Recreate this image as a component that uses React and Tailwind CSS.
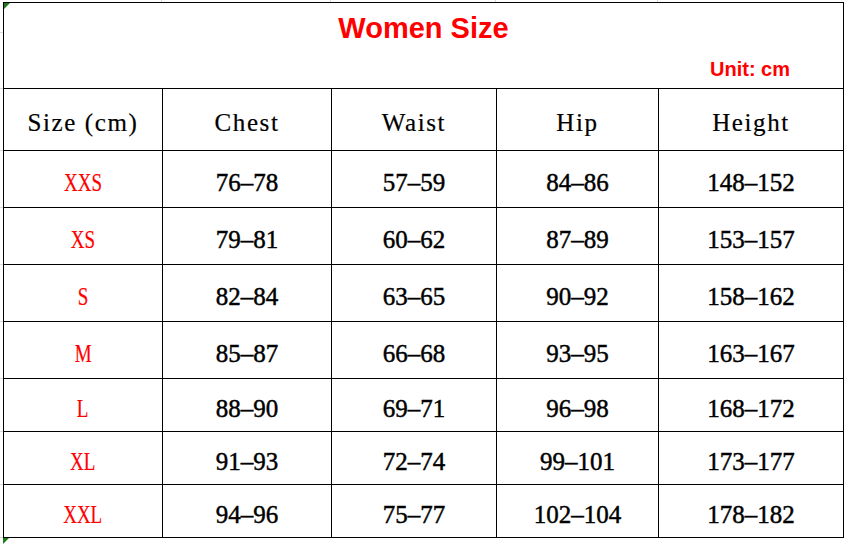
import React from 'react';

const ROWS = [
  { size: 'XXS', chest: '76–78', waist: '57–59', hip: '84–86', height: '148–152', tall: true },
  { size: 'XS', chest: '79–81', waist: '60–62', hip: '87–89', height: '153–157', tall: true },
  { size: 'S', chest: '82–84', waist: '63–65', hip: '90–92', height: '158–162', tall: true },
  { size: 'M', chest: '85–87', waist: '66–68', hip: '93–95', height: '163–167', tall: true },
  { size: 'L', chest: '88–90', waist: '69–71', hip: '96–98', height: '168–172', tall: false },
  { size: 'XL', chest: '91–93', waist: '72–74', hip: '99–101', height: '173–177', tall: false },
  { size: 'XXL', chest: '94–96', waist: '75–77', hip: '102–104', height: '178–182', tall: false },
];

const HEADERS = ['Size (cm)', 'Chest', 'Waist', 'Hip', 'Height'];

// small spreadsheet indicator in the corner of a cell
const GreenMark = () => (
  <span className="w-0 h-0 border-t-[6px] border-t-[#1e7b1e] border-r-[6px] border-r-transparent" />
);

const App = () => {
  return (
    <div className="w-[846px] h-[544px] bg-white overflow-hidden flex">
      {/* left gutter with faint grid ticks */}
      <div className="w-[3px] flex flex-col">
        <div className="h-[33px] border-b border-[#d9d9d9]" />
        <div className="h-[56px] border-b border-[#d9d9d9]" />
        <div className="h-[62px] border-b border-[#d9d9d9]" />
        {ROWS.map((r, i) => (
          <div key={i} className={`${r.tall ? 'h-[57px]' : 'h-[53px]'} border-b border-[#d9d9d9]`} />
        ))}
      </div>

      <div className="flex flex-col">
        {/* top gutter with faint grid ticks */}
        <div className="h-[3px] flex">
          <div className="w-[159px] border-r border-[#d9d9d9]" />
          <div className="w-[169px] border-r border-[#d9d9d9]" />
          <div className="w-[165px] border-r border-[#d9d9d9]" />
          <div className="w-[162px] border-r border-[#d9d9d9]" />
          <div className="w-[185px]" />
        </div>

        <div className="grid bg-black gap-[1px] p-[1px] grid-cols-[158px_168px_164px_161px_184px] grid-rows-[85px_61px_56px_56px_56px_56px_52px_52px_52px]">
          {/* title */}
          <div className="col-span-5 bg-white relative flex flex-col items-center pt-[11px] font-['Liberation_Sans',Arial,sans-serif] font-bold text-[#ff0000]">
            <div className="absolute left-0 top-0 flex">
              <GreenMark />
            </div>
            <div className="text-[29px] leading-none">Women Size</div>
            <div className="self-end pr-[53px] mt-[16px] text-[20px] leading-none">Unit: cm</div>
          </div>

          {/* header */}
          {HEADERS.map((h) => (
            <div
              key={h}
              className="bg-white flex items-center justify-center pt-[6px] text-[25px] leading-none tracking-[1.6px] text-black font-['Liberation_Serif','Times_New_Roman',serif] [-webkit-text-stroke:0.2px_black]"
            >
              {h}
            </div>
          ))}

          {/* body */}
          {ROWS.map((r) => (
            <React.Fragment key={r.size}>
              <div className="bg-white flex items-center justify-center pt-[6px] font-['Liberation_Serif','Times_New_Roman',serif] text-[25px] leading-none text-[#ff0000]">
                <span className="inline-block scale-x-[0.76] [-webkit-text-stroke:0.2px_#ff0000]">{r.size}</span>
              </div>
              {[r.chest, r.waist, r.hip, r.height].map((v, j) => (
                <div
                  key={j}
                  className="bg-white flex items-center justify-center pt-[6px] font-['Liberation_Serif','Times_New_Roman',serif] text-[25px] leading-none text-black [-webkit-text-stroke:0.45px_black]"
                >
                  {v}
                </div>
              ))}
            </React.Fragment>
          ))}
        </div>

        {/* bottom strip */}
        <div className="h-[6px] flex">
          <GreenMark />
        </div>
      </div>
    </div>
  );
};

export default App;
